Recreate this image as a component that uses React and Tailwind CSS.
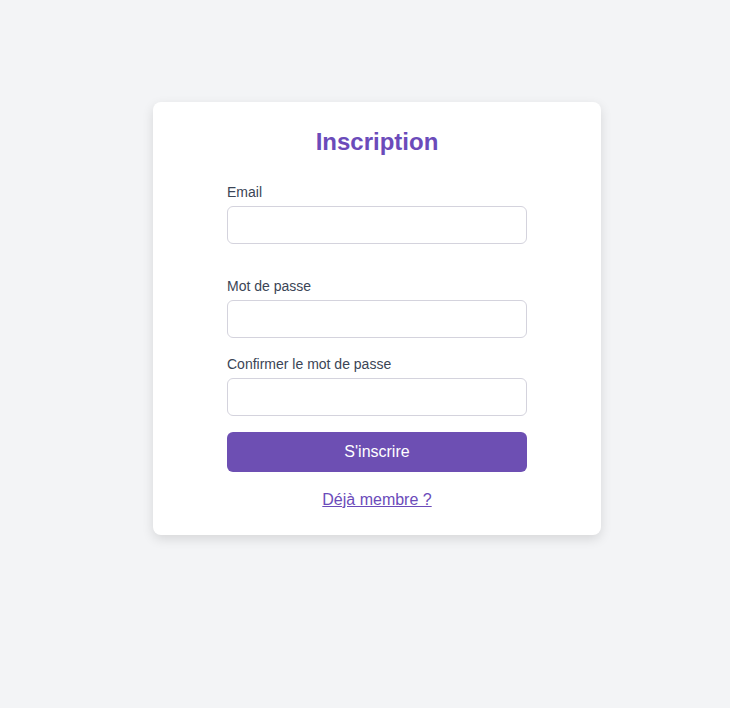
import { useState } from "react"

const Field = ({ label, type, value, onChange, className = "" }) => (
  <div className={`flex flex-col ${className}`}>
    <label className="text-[14px] leading-[16px] text-[#3b4556] mb-[6px]">{label}</label>
    <input
      type={type}
      value={value}
      onChange={(e) => onChange(e.target.value)}
      className="h-[38px] w-full rounded-[6px] border border-[#d4d3dd] bg-white px-3 text-[14px] outline-none focus:border-[#6b4fb3]"
    />
  </div>
)

const App = () => {
  const [email, setEmail] = useState("")
  const [password, setPassword] = useState("")
  const [confirm, setConfirm] = useState("")

  return (
    <div className="min-h-[708px] bg-[#f3f4f6] pt-[102px] pl-[24px] flex justify-center items-start font-['Liberation_Sans',Arial,sans-serif]">
      <div className="w-[448px] rounded-[8px] bg-white shadow-[0_4px_12px_rgba(0,0,0,0.12)] pt-[26px] pb-[26px] flex flex-col items-center">
        <h1 className="text-[24px] leading-[28px] font-bold text-[#6b4bba]">Inscription</h1>

        <form className="w-[300px] mt-[28px] flex flex-col" onSubmit={(e) => e.preventDefault()}>
          <Field label="Email" type="email" value={email} onChange={setEmail} className="mb-[34px]" />
          <Field label="Mot de passe" type="password" value={password} onChange={setPassword} className="mb-[18px]" />
          <Field label="Confirmer le mot de passe" type="password" value={confirm} onChange={setConfirm} />

          <button
            type="submit"
            className="mt-[16px] h-[40px] w-full rounded-[6px] bg-[#6d4fb3] text-[16px] text-white"
          >
            S'inscrire
          </button>
        </form>

        <a href="#" className="mt-[19px] text-[16px] leading-[18px] text-[#6b4bba] underline">
          Déjà membre ?
        </a>
      </div>
    </div>
  )
}

export default App
